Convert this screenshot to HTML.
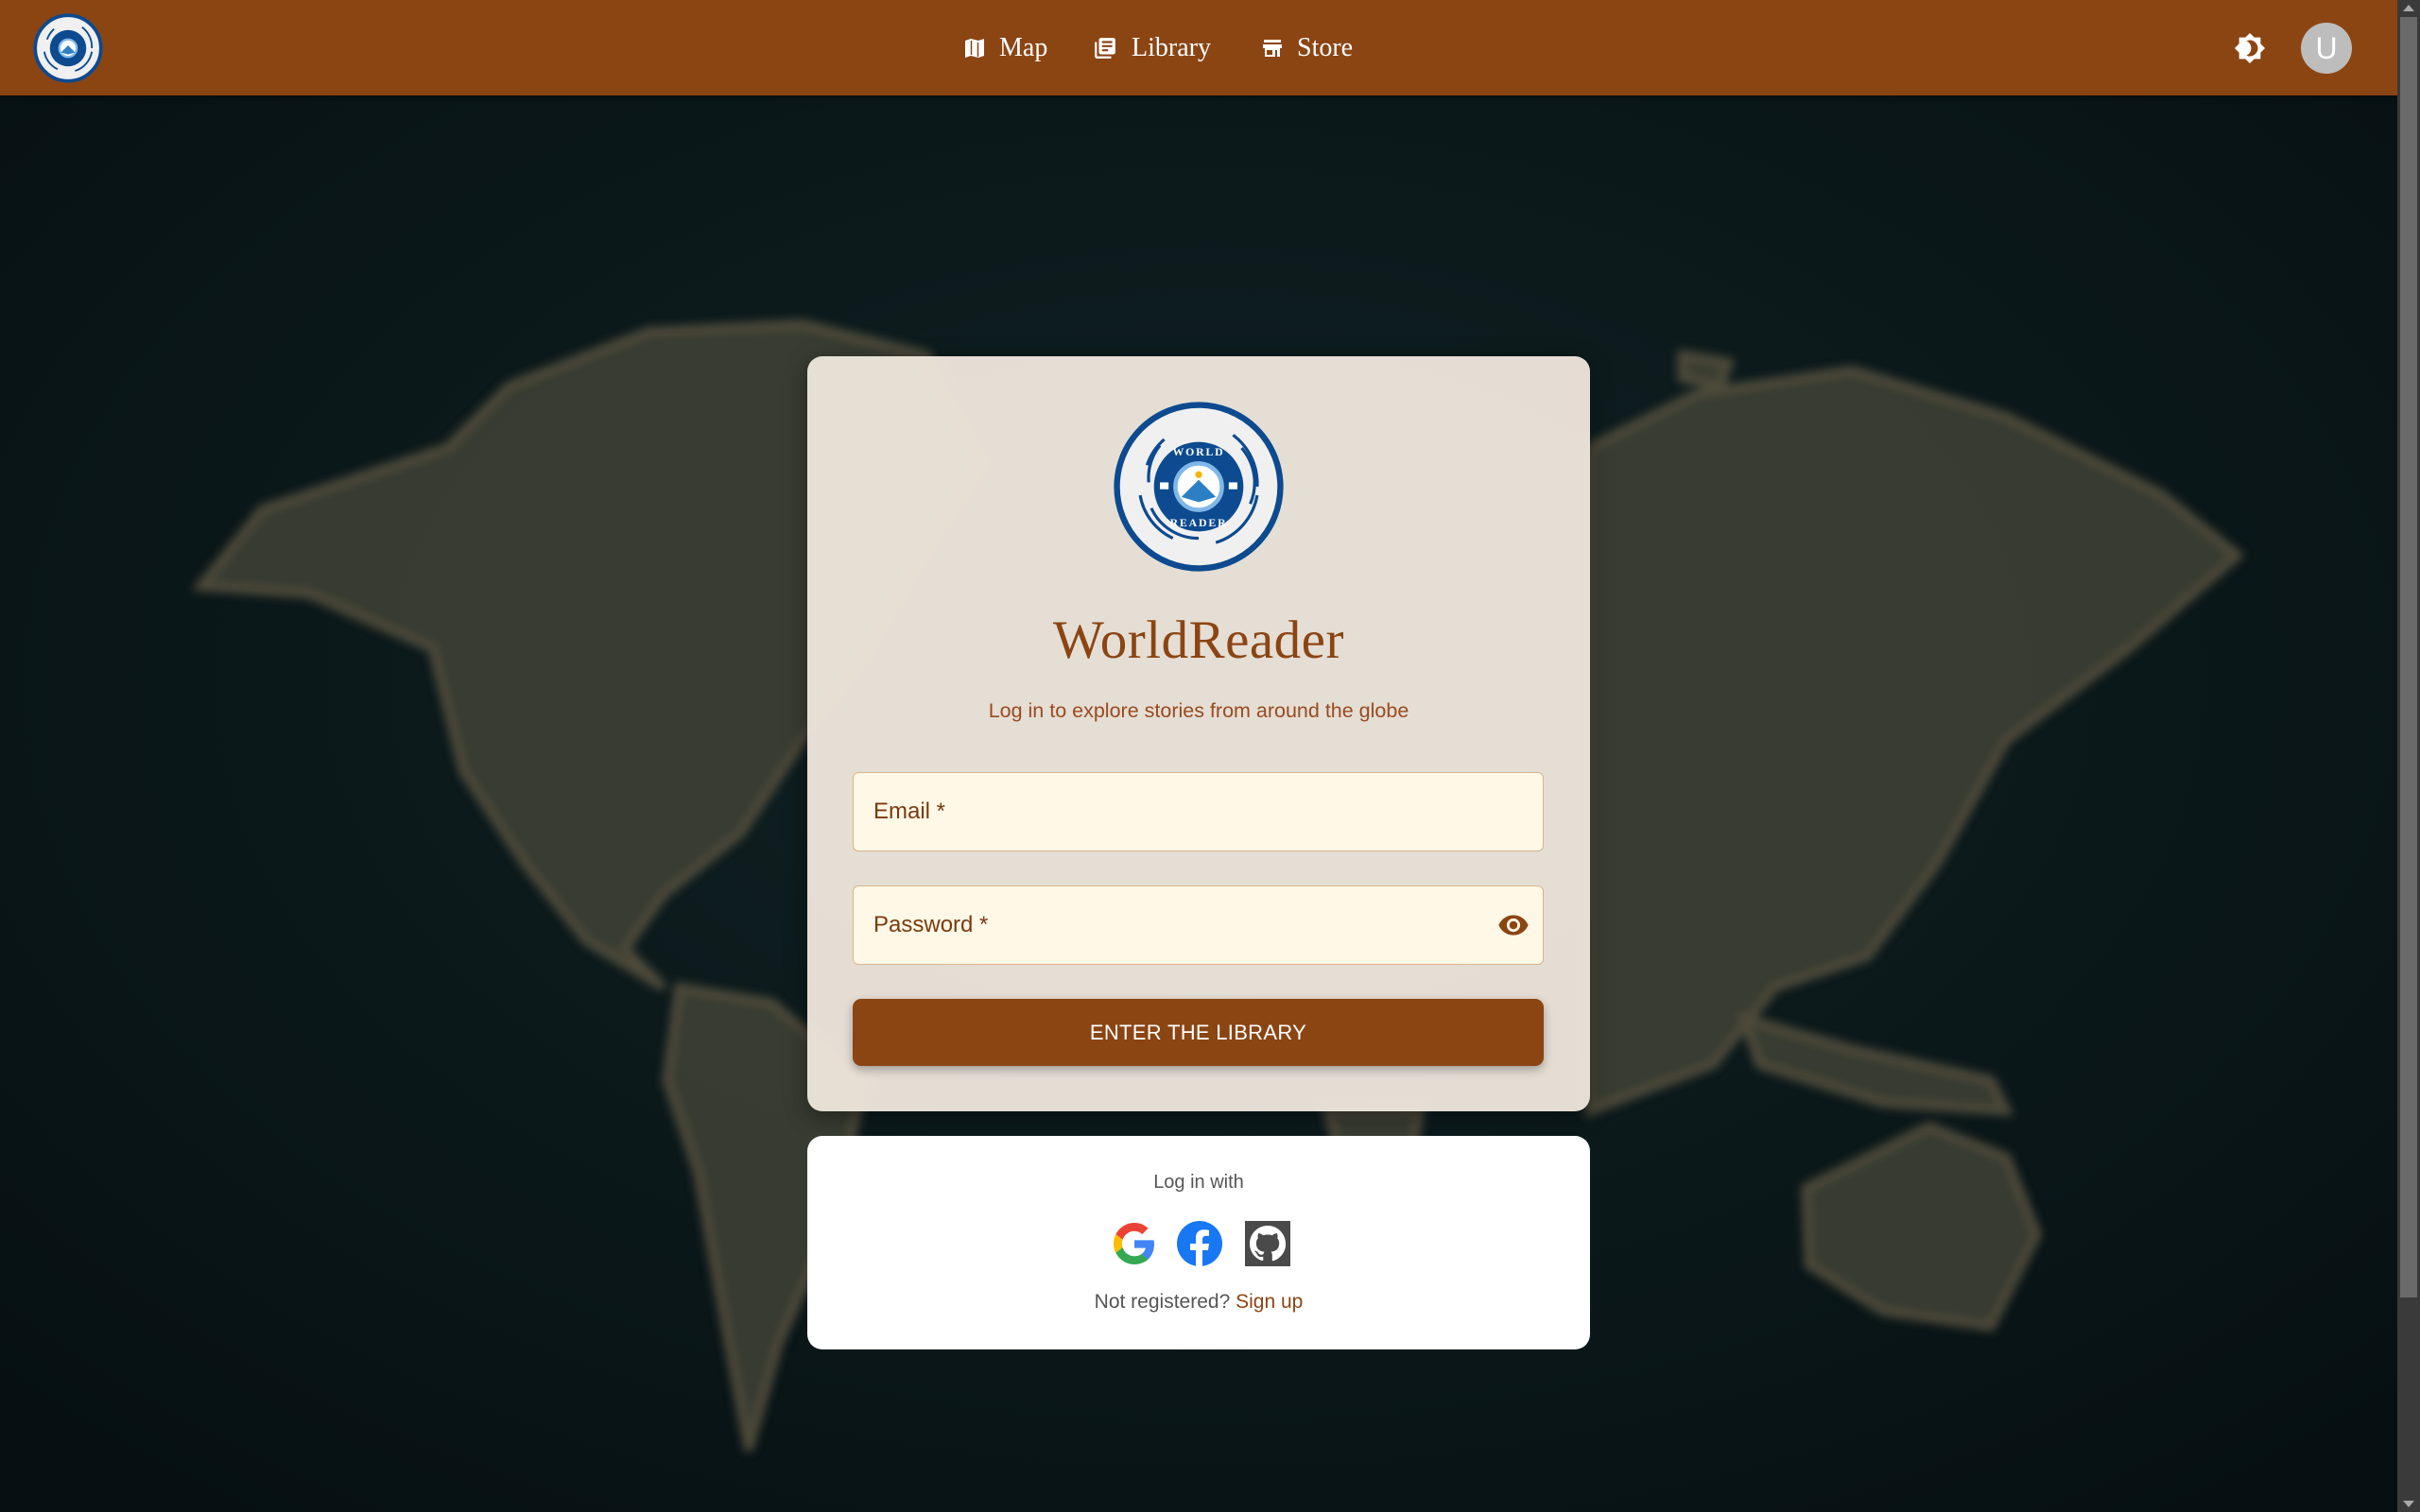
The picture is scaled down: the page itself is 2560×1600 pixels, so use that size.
<!DOCTYPE html>
<html><head><meta charset="utf-8">
<style>
*{box-sizing:border-box;margin:0;padding:0}
html,body{width:2560px;height:1600px;overflow:hidden;background:#0b1719;font-family:"Liberation Sans",sans-serif}
#bg{position:absolute;left:0;top:0;width:2560px;height:1600px}
header{position:absolute;left:0;top:0;width:2536px;height:101px;background:#8b4513;box-shadow:0 2px 6px rgba(0,0,0,.4)}
.nav{position:absolute;top:0;height:101px;display:flex;align-items:center;color:#fff;font-family:"Liberation Serif",serif;font-size:28px}
.nav svg{display:block}
.scroll{position:absolute;left:2536px;top:0;width:24px;height:1600px;background:#3a3a3a}
.thumb{position:absolute;left:2539px;top:18px;width:18px;height:1355px;background:#6a6a6a}
.card{position:absolute;left:854px;width:828px;border-radius:16px}
.c1{top:377px;height:799px;background:rgba(236,228,218,.97);box-shadow:0 6px 24px rgba(0,0,0,.4)}
.c2{top:1202px;height:226px;background:#fff}
.title{position:absolute;left:0;width:828px;top:268px;text-align:center;font-family:"Liberation Serif",serif;font-size:57px;letter-spacing:.5px;color:#8b4513}
.sub{position:absolute;left:0;width:828px;top:363px;text-align:center;font-size:21.5px;color:#9a4a20}
.field{position:absolute;left:902px;width:731px;height:84px;background:#fff8e6;border:1.5px solid #d9b48a;border-radius:6px}
.field span{position:absolute;left:21px;top:27px;font-size:24px;color:#7a3a10}
.btn{position:absolute;left:902px;top:1057px;width:731px;height:71px;background:#8b4513;border-radius:9px;box-shadow:0 4px 10px rgba(0,0,0,.3);color:#fff;font-size:22px;text-align:center;line-height:71px;letter-spacing:.3px}
</style></head><body>
<svg id="bg" viewBox="0 0 1568 980" preserveAspectRatio="none">
<defs>
<filter id="b"><feGaussianBlur stdDeviation="3"/></filter>
<radialGradient id="v" cx="50%" cy="45%" r="70%"><stop offset="0" stop-color="#112224"/><stop offset="1" stop-color="#061012"/></radialGradient>
</defs>
<rect width="1568" height="980" fill="url(#v)"/>
<g fill="#3f4234" opacity=".85" filter="url(#b)" stroke="#5a5340" stroke-width="6">
<path d="M130 380 L170 330 L290 290 L330 250 L420 215 L520 210 L600 230 L640 300 L600 360 L560 430 L520 480 L480 540 L430 580 L405 615 L430 640 L380 610 L340 560 L300 500 L280 420 L200 385Z"/>
<path d="M440 640 L500 650 L560 700 L540 790 L505 870 L485 940 L470 860 L452 760 L432 700Z"/>
<path d="M1030 290 L1100 255 L1200 240 L1300 270 L1400 320 L1450 360 L1380 420 L1300 480 L1255 560 L1210 620 L1150 640 L1110 690 L1030 720Z"/>
<path d="M1170 770 L1250 730 L1300 750 L1320 800 L1290 860 L1220 850 L1172 820Z"/>
<path d="M1130 660 L1200 680 L1290 700 L1300 720 L1220 715 L1140 690Z"/>
<path d="M1090 230 L1120 235 L1115 250 L1090 245Z"/>
<path d="M860 720 L920 720 L905 800 L880 790Z"/>
</g>
</svg>

<header>
<svg style="position:absolute;left:35px;top:14px" width="74" height="74" viewBox="0 0 200 200">
<circle cx="100" cy="100" r="94" fill="#f0f0f0" stroke="#0d4a8f" stroke-width="10"/>
<g fill="none" stroke="#0d4a8f" stroke-width="5"><path d="M60 45 A68 68 0 0 0 40 75"/><path d="M140 40 A70 70 0 0 1 168 100"/><path d="M32 110 A68 68 0 0 0 70 160"/><path d="M168 110 A70 70 0 0 1 120 165"/></g>
<circle cx="100" cy="100" r="52" fill="#0d4a8f"/>
<circle cx="100" cy="100" r="25" fill="#fff" stroke="#7fb8e8" stroke-width="6"/>
<path d="M80 112 L100 92 L120 112 L100 118Z" fill="#2d7fc4"/>
</svg>
<div class="nav" style="left:1019px">
<svg width="24" height="24" viewBox="0 0 24 24"><path fill="#fff" d="M2 4l6-2 8 2 6-2v18l-6 2-8-2-6 2z"/><path d="M8.5 4v15M15.5 6v15" stroke="#8b4513" stroke-width="1.5"/></svg>
<span style="margin-left:14px">Map</span></div>
<div class="nav" style="left:1156px">
<svg width="26" height="26" viewBox="0 0 24 24"><path fill="#fff" d="M4 6H2v14a2 2 0 002 2h14v-2H4z"/><rect x="6" y="2" width="16" height="16" rx="2" fill="#fff"/><path d="M9 6h10M9 10h10M9 14h6" stroke="#8b4513" stroke-width="2"/></svg>
<span style="margin-left:15px">Library</span></div>
<div class="nav" style="left:1334px">
<svg width="24" height="24" viewBox="0 0 24 24"><path fill="#fff" d="M3 3h18v3H3z M2 8h20v4H2z M4 12h16v9H4z"/><path fill="#8b4513" d="M6 14h6v5H6z M15 14h2v7h-2z"/></svg>
<span style="margin-left:14px">Store</span></div>
<svg style="position:absolute;left:2363px;top:34px" width="34" height="34" viewBox="0 0 24 24"><path fill="#fff" d="M20 8.69V4h-4.69L12 .69 8.69 4H4v4.69L.69 12 4 15.31V20h4.69L12 23.31 15.31 20H20v-4.69L23.31 12 20 8.69zM12 18c-.89 0-1.74-.2-2.5-.55C11.56 16.5 13 14.42 13 12s-1.440-4.5-3.5-5.45C10.26 6.2 11.11 6 12 6c3.31 0 6 2.69 6 6s-2.69 6-6 6z"/></svg>
<div style="position:absolute;left:2434px;top:24px;width:54px;height:54px;border-radius:50%;background:#bdbdbd;color:#fff;font-size:32px;text-align:center;line-height:54px">U</div>
</header>
<div class="scroll"></div><div class="thumb"></div>
<div style="position:absolute;left:2542px;top:5px;width:0;height:0;border-left:6px solid transparent;border-right:6px solid transparent;border-bottom:7px solid #aaa"></div>
<div style="position:absolute;left:2542px;top:1588px;width:0;height:0;border-left:6px solid transparent;border-right:6px solid transparent;border-top:7px solid #aaa"></div>

<div class="card c1">
<svg style="position:absolute;left:323px;top:47px" width="182" height="182" viewBox="0 0 200 200">
<circle cx="100" cy="100" r="95" fill="#f0f0f0" stroke="#0d4a8f" stroke-width="7"/>
<g fill="none" stroke="#0d4a8f" stroke-width="3.5">
<path d="M60 45 A68 68 0 0 0 40 75"/><path d="M140 40 A70 70 0 0 1 168 100"/><path d="M32 110 A68 68 0 0 0 70 160"/><path d="M168 110 A70 70 0 0 1 120 165"/>
<path d="M55 52 A60 60 0 0 0 42 95"/><path d="M150 55 A62 62 0 0 1 160 120"/><path d="M45 125 A60 60 0 0 0 100 160"/>
</g>
<circle cx="100" cy="100" r="52" fill="#0d4a8f"/>
<circle cx="100" cy="100" r="27" fill="#fff" stroke="#7fb8e8" stroke-width="5"/>
<path d="M80 112 L100 92 L120 112 L100 118Z" fill="#2d7fc4"/>
<circle cx="100" cy="86" r="4" fill="#f5b400"/>
<rect x="55" y="95" width="10" height="8" fill="#fff"/><rect x="135" y="95" width="10" height="8" fill="#fff"/>
<text x="100" y="64" text-anchor="middle" font-family="Liberation Serif" font-weight="bold" font-size="13" fill="#fff" letter-spacing="2">WORLD</text>
<text x="100" y="146" text-anchor="middle" font-family="Liberation Serif" font-weight="bold" font-size="13" fill="#fff" letter-spacing="2">READER</text>
</svg>
<div class="title">WorldReader</div>
<div class="sub">Log in to explore stories from around the globe</div>
</div>
<div class="field" style="top:817px"><span>Email *</span></div>
<div class="field" style="top:937px"><span>Password *</span>
<svg style="position:absolute;right:14px;top:24px" width="34" height="34" viewBox="0 0 24 24"><path fill="#8b4513" d="M12 4.5C7 4.5 2.73 7.61 1 12c1.73 4.39 6 7.5 11 7.5s9.27-3.11 11-7.5c-1.73-4.39-6-7.5-11-7.5zM12 17c-2.76 0-5-2.24-5-5s2.24-5 5-5 5 2.24 5 5-2.24 5-5 5zm0-8c-1.66 0-3 1.34-3 3s1.34 3 3 3 3-1.34 3-3-1.34-3-3-3z"/></svg></div>
<div class="btn">ENTER THE LIBRARY</div>

<div class="card c2">
<div style="position:absolute;top:38px;width:828px;text-align:center;font-size:20px;color:#555">Log in with</div>
<svg style="position:absolute;left:324px;top:90px" width="44" height="48" viewBox="0 0 48 48">
<path fill="#EA4335" d="M24 9.5c3.5 0 6.6 1.2 9.1 3.6l6.8-6.8C35.8 2.4 30.3 0 24 0 14.6 0 6.6 5.4 2.6 13.2l7.9 6.2C12.4 13.7 17.7 9.5 24 9.5z"/>
<path fill="#4285F4" d="M46.9 24.5c0-1.6-.1-3.1-.4-4.5H24v9h12.9c-.6 3-2.3 5.5-4.8 7.2l7.7 6c4.5-4.2 7.1-10.4 7.1-17.7z"/>
<path fill="#FBBC05" d="M10.5 28.6c-.5-1.4-.8-3-.8-4.6s.3-3.2.8-4.6l-7.9-6.2C.9 16.5 0 20.1 0 24s.9 7.5 2.6 10.8l7.9-6.2z"/>
<path fill="#34A853" d="M24 48c6.5 0 11.9-2.1 15.9-5.8l-7.7-6c-2.2 1.5-5 2.3-8.2 2.3-6.3 0-11.6-4.2-13.5-10l-7.9 6.2C6.6 42.6 14.6 48 24 48z"/>
</svg>
<svg style="position:absolute;left:391px;top:90px" width="48" height="48" viewBox="0 0 48 48"><circle cx="24" cy="24" r="24" fill="#1877F2"/><path fill="#fff" d="M33 31l1-7h-7v-4.5c0-2 1-3.8 4-3.8h3v-6s-2.8-.5-5.4-.5C23 9.2 20 12.4 20 18v6h-6v7h6v17h7V31z"/></svg>
<svg style="position:absolute;left:463px;top:90px" width="48" height="48" viewBox="0 0 48 48"><rect width="48" height="48" fill="#4a4a4a"/><path fill="#fff" d="M24 5C13.5 5 5 13.5 5 24c0 8.4 5.4 15.5 13 18 1 .2 1.3-.4 1.3-.9v-3.3c-5.3 1.2-6.4-2.2-6.4-2.2-.9-2.2-2.1-2.8-2.1-2.8-1.7-1.2.1-1.2.1-1.2 1.9.1 2.9 2 2.9 2 1.7 2.9 4.5 2.1 5.6 1.6.2-1.2.7-2.1 1.2-2.5-4.2-.5-8.7-2.1-8.7-9.4 0-2.1.7-3.8 2-5.1-.2-.5-.8-2.4.2-5 0 0 1.6-.5 5.2 2a18 18 0 019.5 0c3.6-2.5 5.2-2 5.2-2 1 2.6.4 4.5.2 5 1.2 1.3 2 3 2 5.1 0 7.3-4.5 8.9-8.7 9.4.7.6 1.3 1.8 1.3 3.5v5.2c0 .5.3 1.1 1.3.9 7.6-2.5 13-9.6 13-18C43 13.5 34.5 5 24 5z"/></svg>
<div style="position:absolute;top:164px;width:828px;text-align:center;font-size:21px;color:#555">Not registered? <span style="color:#8b4513">Sign up</span></div>
</div>
</body></html>
